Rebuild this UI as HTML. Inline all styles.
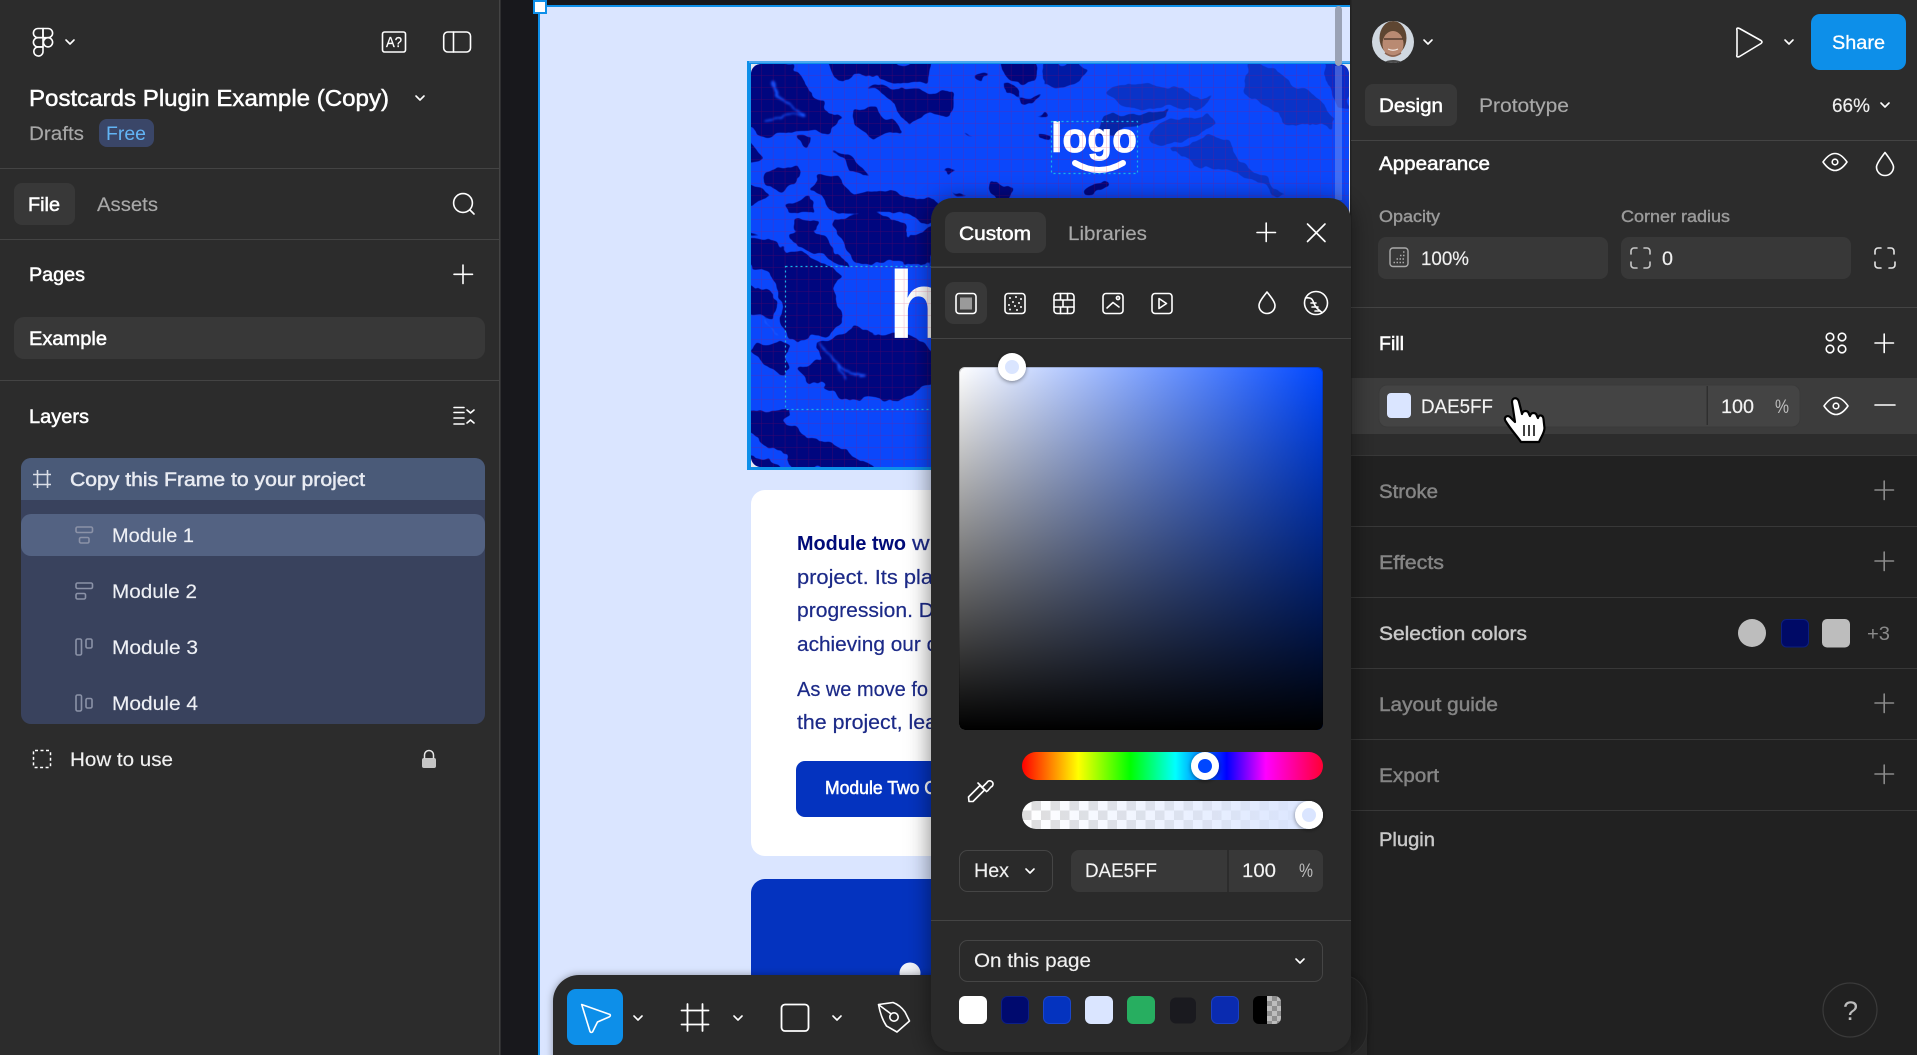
<!DOCTYPE html>
<html lang="en">
<head>
<meta charset="utf-8">
<title>Postcards Plugin Example (Copy)</title>
<style>
html,body{margin:0;padding:0;width:1917px;height:1055px;overflow:hidden;background:#18181c}
svg{display:block;font-family:"Liberation Sans",Arial,sans-serif}
text{white-space:pre}
.t{font-size:19.5px}
.w{fill:#fff}
.wm{fill:#fff;stroke:#fff;stroke-width:.5}
.g{fill:#a8a8a8;stroke:#a8a8a8;stroke-width:.15}
.d{fill:#858585;stroke:#858585;stroke-width:.45}
.s{fill:#c8c8c8;stroke:#c8c8c8;stroke-width:.45}
.r{stroke-width:.2}
.ic{fill:none;stroke:#fff;stroke-width:1.6;stroke-linecap:round;stroke-linejoin:round}
.icg{fill:none;stroke:#8a8a8a;stroke-width:1.6;stroke-linecap:round}
.n{fill:#00067f}
.f{fill:#0a33c8}
.v{fill:none;stroke:#1553ff;stroke-width:6;stroke-linecap:round}
.md{fill:none;stroke:#8b92a7;stroke-width:1.6}
</style>
</head>
<body>
<svg width="1917" height="1055" viewBox="0 0 1917 1055" xmlns="http://www.w3.org/2000/svg">
<defs>
  <clipPath id="heroClip"><rect x="751" y="64" width="598" height="403" rx="10"/></clipPath>
  <pattern id="grid" x="761" y="75" width="11.9" height="12" patternUnits="userSpaceOnUse">
    <path d="M0 0V12M0 0H11.9" stroke="#d40040" stroke-opacity=".27" stroke-width="1" fill="none"/>
  </pattern>
  <linearGradient id="sv1" x1="0" x2="1" y1="0" y2="0"><stop offset="0" stop-color="#fff"/><stop offset="1" stop-color="#0047ff"/></linearGradient>
  <linearGradient id="sv2" x1="0" x2="0" y1="0" y2="1"><stop offset="0" stop-color="#000" stop-opacity="0"/><stop offset="1" stop-color="#000"/></linearGradient>
  <linearGradient id="hue" x1="0" x2="1" y1="0" y2="0">
    <stop offset="0" stop-color="#f00"/><stop offset=".187" stop-color="#ff0"/><stop offset=".36" stop-color="#0f0"/><stop offset=".51" stop-color="#0ff"/><stop offset=".68" stop-color="#00f"/><stop offset=".81" stop-color="#f0f"/><stop offset="1" stop-color="#f03"/>
  </linearGradient>
  <linearGradient id="alpha" x1="0" x2="1" y1="0" y2="0"><stop offset="0" stop-color="#dae5ff" stop-opacity="0"/><stop offset="1" stop-color="#dae5ff"/></linearGradient>
  <pattern id="chk" x="1022" y="801" width="19" height="19" patternUnits="userSpaceOnUse">
    <rect width="19" height="19" fill="#fff"/><rect x="9.5" width="9.5" height="9.5" fill="#dedede"/><rect y="9.5" width="9.5" height="9.5" fill="#dedede"/>
  </pattern>
  <pattern id="chk2" x="1267" y="996" width="10" height="10" patternUnits="userSpaceOnUse">
    <rect width="10" height="10" fill="#bdbdbd"/><rect x="5" width="5" height="5" fill="#8f8f8f"/><rect y="5" width="5" height="5" fill="#8f8f8f"/>
  </pattern>
  <clipPath id="sw8"><rect x="1253" y="996" width="28" height="28" rx="6"/></clipPath>
  <clipPath id="av"><circle cx="1393" cy="42" r="21"/></clipPath>
  <filter id="soft" x="-8%" y="-8%" width="116%" height="116%" color-interpolation-filters="sRGB">
    <feTurbulence type="fractalNoise" baseFrequency=".012" numOctaves="4" seed="3" result="n"/>
    <feDisplacementMap in="SourceGraphic" in2="n" scale="60" xChannelSelector="R" yChannelSelector="G" result="d"/>
    <feGaussianBlur in="d" stdDeviation="3"/>
    <feComponentTransfer><feFuncA type="linear" slope="3" intercept="-1"/></feComponentTransfer>
  </filter>
  <filter id="psh" x="-15%" y="-10%" width="130%" height="120%"><feDropShadow dx="0" dy="3" stdDeviation="12" flood-color="#000" flood-opacity=".5"/></filter>
  <filter id="hsh" x="-40%" y="-40%" width="180%" height="180%"><feDropShadow dx="0" dy="1" stdDeviation="2" flood-color="#000" flood-opacity=".45"/></filter>
  <filter id="tsh" x="-5%" y="-10%" width="110%" height="120%"><feDropShadow dx="0" dy="0" stdDeviation="4" flood-color="#000" flood-opacity=".35"/></filter>
</defs>

<!-- canvas -->
<rect width="1917" height="1055" fill="#18181c"/>
<rect x="538" y="5" width="812" height="1050" fill="#0d8fe9"/>
<rect x="540" y="7" width="810" height="1048" fill="#dae5ff"/>

<!-- hero -->
<rect x="747" y="61" width="603" height="409" fill="#0d8fe9"/>
<rect x="749" y="61" width="601" height="2" fill="#4aa8f0"/>
<rect x="751" y="64" width="599" height="403" fill="#e4e8f2"/>
<g clip-path="url(#heroClip)">
  <rect x="751" y="64" width="600" height="403" fill="#0b47fb"/>
  <g transform="translate(500 0) scale(.33333)">
    <g filter="url(#soft)">
    <path class="n" d="M740,215L770,180L860,180L870,215L930,262L975,295L985,335L1020,365L985,395L920,385L860,390L800,403L740,395Z"/>
    <path class="n" d="M965,180L1295,195L1290,240L1200,250L1100,232L1060,225L1035,250L1000,240Z"/>
    <path class="n" d="M1060,335L1130,320L1200,380L1130,425L1100,400L1060,360Z"/>
    <path class="n" d="M1090,265L1350,275L1350,345L1280,345L1230,375L1170,320Z"/>
    <path class="n" d="M885,400L925,410L925,445L890,420Z"/>
    <path class="n" d="M740,410L790,470L740,490Z"/>
    <path class="n" d="M740,550L800,600L740,612Z"/>
    <path class="n" d="M800,505L890,500L895,545L850,570L790,560Z"/>
    <path class="n" d="M1000,460L1060,480L1120,540L1050,510Z"/>
    <path class="n" d="M960,525L1030,540L1060,580L1190,575L1300,600L1300,680L1210,640L1080,640L1000,620L925,575Z"/>
    <path class="n" d="M850,610L920,590L940,640L860,640Z"/>
    <path class="n" d="M1000,650L1120,640L1215,680L1220,700L1300,680L1300,790L1060,790L1040,740L1000,680Z"/>
    <path class="n" d="M880,660L945,660L945,690L880,690Z"/>
    <path class="n" d="M855,700L930,690L990,740L1050,795L940,760L860,720Z"/>
    <path class="n" d="M740,680L800,715L740,705Z"/>
    <path class="n" d="M740,710L800,735L900,760L1015,820L1015,960L980,1015L900,1015L860,1000L850,905L800,820L740,800Z"/>
    <path class="n" d="M740,850L830,890L830,960L740,930Z"/>
    <path class="n" d="M760,1050L830,1020L880,1030L850,1130L790,1100Z"/>
    <path class="n" d="M960,1040L1050,985L1150,1000L1250,1020L1300,1060L1300,1150L1220,1190L1200,1205L1060,1210L1000,1170L905,1150L880,1100L960,1090Z"/>
    <path class="n" d="M740,1230L860,1222L870,1245L850,1265L900,1290L1030,1345L1140,1410L890,1410L870,1365L740,1300Z"/>
    <path class="n" d="M740,1350L820,1370L850,1410L760,1410Z"/>
    <path class="v" d="M815,240L850,300L915,355M790,355L915,355"/>
    <path class="v" d="M1000,1080L1100,1130M800,955L830,1000M970,1040L1050,1130"/>
    </g>
  </g>
  <g transform="translate(930 0) scale(.33333)">
    <g filter="url(#soft)">
    <path class="n" d="M205,180L300,180L305,235L240,240Z"/>
    <path fill="#001aa5" d="M335,185L430,185L480,225L400,270L350,260L325,230Z"/>
    <path class="n" d="M225,255L260,255L265,285L225,280Z"/>
    <path class="n" d="M255,290L350,285L320,305L270,305Z"/>
    <path class="n" d="M140,215L190,225L150,235Z"/>
    <path class="n" d="M0,300L50,330L0,330Z"/>
    <path class="n" d="M330,385L365,395L360,420L330,410Z"/>
    <path class="n" d="M305,340L360,345L340,350Z"/>
    <path class="n" d="M90,395L150,405L110,405Z"/>
    <path class="n" d="M190,560L250,560L240,590L190,575Z"/>
    <path class="n" d="M450,570L530,540L540,560L470,585Z"/>
    <path class="n" d="M50,510L85,510L65,525Z"/>
    <path class="n" d="M70,570L105,595L80,595Z"/>
    <path fill="#0a2cc8" d="M1180,180L1270,180L1270,325L1220,310L1190,230Z"/>
    <path class="f" d="M535,280L580,255L700,255L860,295L780,325L590,320Z"/>
    <path class="f" d="M945,185L1040,215L1110,280L1210,350L1200,375L1050,360L1000,310L940,260Z"/>
    <path class="f" d="M650,415L700,365L830,340L850,370L720,440L680,445Z"/>
    <path class="f" d="M730,450L830,400L900,430L980,520L1080,590L960,540L800,490Z"/>
    <path fill="#0426a8" d="M480,390L530,350L720,335L640,390L500,400Z"/>
    </g>
  </g>
  <!-- logo -->
  <text x="1051" y="152" font-size="42" font-weight="700" fill="#fff" stroke="#fff" stroke-width=".8" textLength="86" lengthAdjust="spacingAndGlyphs">logo</text>
  <path d="M1075 163Q1099 177 1123 163" fill="none" stroke="#fff" stroke-width="6" stroke-linecap="round"/>
  <!-- heading -->
  <text x="888" y="338" font-size="96" font-weight="700" fill="#fff">h</text>
  <rect x="751" y="64" width="600" height="403" fill="url(#grid)"/>
</g>
<rect x="785.5" y="266.5" width="600" height="143" fill="none" stroke="#18b4e8" stroke-width="1.2" stroke-dasharray="2 3"/>
<rect x="1051.5" y="121.5" width="86" height="52" fill="none" stroke="#18b4e8" stroke-width="1.2" stroke-dasharray="2 3"/>

<!-- scrollbar -->
<rect x="1335" y="6" width="7" height="60" rx="3.5" fill="#9aa2b5"/>
<rect x="1335" y="66" width="7" height="134" fill="#8fa8ef" fill-opacity=".4"/>

<!-- frame handle -->
<rect x="534" y="1" width="12" height="12" fill="#fff" stroke="#0d8fe9" stroke-width="2"/>

<!-- content cards -->
<rect x="751" y="490" width="640" height="366" rx="14" fill="#fff"/>
<text x="797" y="550" font-size="20" font-weight="700" fill="#000a78" textLength="109" lengthAdjust="spacingAndGlyphs">Module two</text>
<text x="912" y="550" font-size="20" fill="#1c2a88" stroke="#1c2a88" stroke-width=".2" textLength="23" lengthAdjust="spacingAndGlyphs">wi</text>
<g font-size="20" fill="#1c2a88" stroke="#1c2a88" stroke-width=".2">
  <text x="797" y="584" textLength="136" lengthAdjust="spacingAndGlyphs">project. Its pla</text>
  <text x="797" y="617" textLength="137" lengthAdjust="spacingAndGlyphs">progression. D</text>
  <text x="797" y="651" textLength="140" lengthAdjust="spacingAndGlyphs">achieving our c</text>
  <text x="797" y="696" textLength="131" lengthAdjust="spacingAndGlyphs">As we move fo</text>
  <text x="797" y="729" textLength="140" lengthAdjust="spacingAndGlyphs">the project, lea</text>
</g>
<rect x="796" y="761" width="200" height="56" rx="9" fill="#0433bf"/>
<text x="825" y="794" font-size="18" fill="#fff" stroke="#fff" stroke-width=".55" textLength="112" lengthAdjust="spacingAndGlyphs">Module Two C</text>
<rect x="751" y="879" width="640" height="190" rx="14" fill="#0433bf"/>
<circle cx="910" cy="973" r="10.5" fill="#f2f4fa"/>

<!-- left panel -->
<rect x="0" y="0" width="499" height="1055" fill="#2c2c2c"/>
<rect x="499" y="0" width="1.5" height="1055" fill="#444"/>
<g fill="#444"><rect y="168" width="499" height="1"/><rect y="239" width="499" height="1"/><rect y="380" width="499" height="1"/></g>

<g class="ic" stroke-width="1.5">
  <path d="M43 28.5H38a4.6 4.6 0 0 0 0 9.2H43Z"/>
  <path d="M43 28.5h5a4.6 4.6 0 0 1 0 9.2H43Z"/>
  <path d="M43 37.7H38a4.6 4.6 0 0 0 0 9.2H43Z"/>
  <circle cx="48" cy="42.3" r="4.6"/>
  <path d="M38 46.9H43V51a4.6 4.6 0 1 1-5-4.1Z"/>
  <path d="M66 40l4 4 4-4"/>
  <rect x="382.5" y="32" width="23" height="20" rx="2"/>
  <rect x="443.7" y="32" width="26.8" height="20" rx="4"/>
  <path d="M453.5 32v20"/>
  <path d="M416 96l4 4 4-4"/>
  <circle cx="463" cy="203" r="9.4"/>
  <path d="M470 210l4 4"/>
  <path d="M454 274.300h18.500M463 265v18.500"/>
  <path d="M454 407.500h10M454 412.500h10M454 418h10M454 424h10"/>
  <path d="M467 410l3.500 3 3.500-3M467 423l3.500-3 3.500 3"/>
</g>
<text x="386" y="47" font-size="15" fill="#fff" stroke="#fff" stroke-width=".3" textLength="16" lengthAdjust="spacingAndGlyphs">A?</text>

<text class="wm" x="29" y="106" font-size="23.5" textLength="360" lengthAdjust="spacingAndGlyphs">Postcards Plugin Example (Copy)</text>
<text class="g t" x="29" y="140" textLength="55" lengthAdjust="spacingAndGlyphs">Drafts</text>
<rect x="99" y="119" width="55" height="28" rx="8" fill="#3a4668"/>
<text x="106" y="140" font-size="19.5" fill="#62b4f5" textLength="40" lengthAdjust="spacingAndGlyphs">Free</text>

<rect x="14" y="183" width="61" height="42" rx="8" fill="#383838"/>
<text class="wm t" x="28" y="211" textLength="32" lengthAdjust="spacingAndGlyphs">File</text>
<text class="g t" x="97" y="211" textLength="61" lengthAdjust="spacingAndGlyphs">Assets</text>

<text class="wm t" x="29" y="281" textLength="56" lengthAdjust="spacingAndGlyphs">Pages</text>
<rect x="14" y="317" width="471" height="42" rx="10" fill="#383838"/>
<text class="wm t" x="29" y="345" textLength="78" lengthAdjust="spacingAndGlyphs">Example</text>

<text class="wm t" x="29" y="423" textLength="60" lengthAdjust="spacingAndGlyphs">Layers</text>

<rect x="21" y="458" width="464" height="266" rx="10" fill="#39425d"/>
<path d="M31 458H475a10 10 0 0 1 10 10V500H21V468a10 10 0 0 1 10-10Z" fill="#4a5a78"/>
<rect x="21" y="514" width="464" height="42" rx="10" fill="#536282"/>
<path d="M37.500 470v18M47.500 470v18M33 474.500h18M33 484.500h18" stroke="#d9dde6" stroke-width="1.6" fill="none"/>
<text x="70" y="486" font-size="19.5" fill="#e8ebf2" stroke="#e8ebf2" stroke-width=".5" textLength="295" lengthAdjust="spacingAndGlyphs">Copy this Frame to your project</text>
<g class="md">
  <rect x="76" y="527" width="16.500" height="5.500" rx="1.500"/><rect x="79.500" y="537.500" width="9.500" height="5.500" rx="1.500"/>
  <rect x="76" y="583" width="16.500" height="5.500" rx="1.500"/><rect x="76" y="593.500" width="9.500" height="5.500" rx="1.500"/>
  <rect x="76" y="639" width="5.500" height="16" rx="1.500"/><rect x="86" y="639" width="6" height="9" rx="1.500"/>
  <rect x="76" y="695" width="5.500" height="16" rx="1.500"/><rect x="86" y="698.500" width="6" height="9.500" rx="1.500"/>
</g>
<g font-size="19.5" fill="#eef0f5" stroke="#eef0f5" stroke-width=".15">
  <text x="112" y="542" textLength="82" lengthAdjust="spacingAndGlyphs">Module 1</text>
  <text x="112" y="598" textLength="85" lengthAdjust="spacingAndGlyphs">Module 2</text>
  <text x="112" y="654" textLength="86" lengthAdjust="spacingAndGlyphs">Module 3</text>
  <text x="112" y="710" textLength="86" lengthAdjust="spacingAndGlyphs">Module 4</text>
</g>
<rect x="33.500" y="750.500" width="17" height="17" rx="1.500" fill="none" stroke="#fff" stroke-width="1.500" stroke-dasharray="3 2.500"/>
<text class="t" x="70" y="766" fill="#f0f0f0" stroke="#f0f0f0" stroke-width=".15" textLength="103" lengthAdjust="spacingAndGlyphs">How to use</text>
<rect x="422" y="758" width="14" height="10" rx="2" fill="#c5c5c5"/>
<path d="M424.500 758.500v-3.500a4.500 4.500 0 0 1 9 0v3.500" fill="none" stroke="#e5e5e5" stroke-width="1.500"/>

<!-- right panel -->
<rect x="1350" y="0" width="567" height="1055" fill="#2c2c2c"/>
<rect x="1350" y="0" width="1.500" height="1055" fill="#222"/>
<rect x="1351.500" y="456" width="566" height="599" fill="#212121"/>
<rect x="1351.500" y="378" width="566" height="56" fill="#3c3c3c"/>
<g fill="#444">
  <rect x="1351" y="140" width="566" height="1"/><rect x="1351" y="307" width="566" height="1"/>
</g>
<g fill="#383838">
  <rect x="1351" y="455" width="566" height="1"/><rect x="1351" y="526" width="566" height="1"/><rect x="1351" y="597" width="566" height="1"/><rect x="1351" y="668" width="566" height="1"/><rect x="1351" y="739" width="566" height="1"/><rect x="1351" y="810" width="566" height="1"/>
</g>

<!-- avatar -->
<g clip-path="url(#av)">
  <rect x="1372" y="21" width="42" height="42" fill="#d0d8e0"/>
  <ellipse cx="1393" cy="38" rx="13.500" ry="17" fill="#5e4632"/>
  <ellipse cx="1393" cy="44" rx="10.500" ry="13" fill="#b98a72"/>
  <path d="M1380 64q13-8 26 0Z" fill="#4a4a4a"/>
  <path d="M1385 53q8 6 16 0" fill="none" stroke="#8a6350" stroke-width="1.500"/>
  <path d="M1384 39h19" stroke="#3e2c22" stroke-width="1.200"/>
  <path d="M1388 49q5 2.500 10 0" fill="none" stroke="#f2e6e0" stroke-width="1.200"/>
</g>
<g class="ic">
  <path d="M1424 40l4 4 4-4"/>
  <path d="M1737 30.500Q1736 27 1739.500 28.500L1761 40.500Q1763 42 1761 43.500L1739.500 56.500Q1736 58 1737 54.500Z"/>
  <path d="M1785 40l4 4 4-4"/>
  <path d="M1881 103l4 4 4-4"/>
  <path d="M1823 162Q1835 145 1847 162Q1835 179 1823 162Z"/>
  <circle cx="1835" cy="162" r="2.800"/>
  <path d="M1885 152.500C1890 159 1893.500 164 1893.500 167a8.500 8.500 0 0 1-17 0C1876.500 164 1880 159 1885 152.500Z"/>
</g>
<rect x="1811" y="14" width="95" height="56" rx="9" fill="#0d8fe9"/>
<text class="t" x="1832" y="49" fill="#fff" stroke="#fff" stroke-width=".3" textLength="53" lengthAdjust="spacingAndGlyphs">Share</text>

<rect x="1365" y="84" width="92" height="42" rx="8" fill="#383838"/>
<text class="wm t" x="1379" y="112" textLength="64" lengthAdjust="spacingAndGlyphs">Design</text>
<text class="g t" x="1479" y="112" textLength="90" lengthAdjust="spacingAndGlyphs">Prototype</text>
<text class="t" x="1832" y="112" fill="#f0f0f0" stroke="#f0f0f0" stroke-width=".15" textLength="38" lengthAdjust="spacingAndGlyphs">66%</text>

<text class="wm t" x="1379" y="170" textLength="111" lengthAdjust="spacingAndGlyphs">Appearance</text>
<text x="1379" y="222" font-size="17" fill="#9a9a9a" stroke="#9a9a9a" stroke-width=".4" textLength="61" lengthAdjust="spacingAndGlyphs">Opacity</text>
<text x="1621" y="222" font-size="17" fill="#9a9a9a" stroke="#9a9a9a" stroke-width=".4" textLength="109" lengthAdjust="spacingAndGlyphs">Corner radius</text>
<rect x="1378" y="237" width="230" height="42" rx="8" fill="#383838"/>
<rect x="1621" y="237" width="230" height="42" rx="8" fill="#383838"/>
<rect x="1390" y="248" width="18" height="18.500" rx="3" fill="none" stroke="#aaa" stroke-width="1.400"/>
<path d="M1393.500 262.500h11M1396.500 259h8M1400 255.500h4.500M1403 252h1.500" stroke="#aaa" stroke-width="1.400" stroke-dasharray="1.500 1.500" fill="none"/>
<text class="t" x="1421" y="265" fill="#f0f0f0" stroke="#f0f0f0" stroke-width=".15" textLength="48" lengthAdjust="spacingAndGlyphs">100%</text>
<g fill="none" stroke="#c8c8c8" stroke-width="1.600" stroke-linecap="round">
  <path d="M1631 254v-3a3 3 0 0 1 3-3h3M1644 248h3a3 3 0 0 1 3 3v3M1650 262v3a3 3 0 0 1-3 3h-3M1637 268h-3a3 3 0 0 1-3-3v-3"/>
</g>
<text class="t" x="1662" y="265" fill="#f0f0f0" stroke="#f0f0f0" stroke-width=".15" textLength="11" lengthAdjust="spacingAndGlyphs">0</text>
<g fill="none" stroke="#e6e6e6" stroke-width="1.600" stroke-linecap="round">
  <path d="M1875 254v-3a3 3 0 0 1 3-3h3M1888 248h3a3 3 0 0 1 3 3v3M1895 262v3a3 3 0 0 1-3 3h-3M1881 268h-3a3 3 0 0 1-3-3v-3"/>
</g>

<text class="wm t" x="1379" y="350" textLength="25" lengthAdjust="spacingAndGlyphs">Fill</text>
<g class="ic">
  <circle cx="1830" cy="337" r="3.800"/><circle cx="1842" cy="337" r="3.800"/><circle cx="1830" cy="349" r="3.800"/><circle cx="1842" cy="349" r="3.800"/>
  <path d="M1875 343h18.500M1884.200 334v18.500"/>
</g>

<rect x="1379" y="385" width="421" height="42" rx="8" fill="#444" stroke="#3a3a3a"/>
<rect x="1387" y="393" width="24" height="25" rx="4" fill="#dae5ff"/>
<text class="t" x="1421" y="413" fill="#f4f4f4" stroke="#f4f4f4" stroke-width=".15" textLength="72" lengthAdjust="spacingAndGlyphs">DAE5FF</text>
<rect x="1706.500" y="386" width="1.500" height="39" fill="#2f2f2f"/>
<text class="t" x="1721" y="413" fill="#f4f4f4" stroke="#f4f4f4" stroke-width=".15" textLength="33" lengthAdjust="spacingAndGlyphs">100</text>
<text class="t" x="1775" y="413" fill="#bdbdbd" textLength="14" lengthAdjust="spacingAndGlyphs">%</text>
<g class="ic">
  <path d="M1824 406Q1836 389 1848 406Q1836 423 1824 406Z"/>
  <circle cx="1836" cy="406" r="2.800"/>
  <path d="M1875 405h20"/>
</g>

<text class="d t" x="1379" y="498" textLength="59" lengthAdjust="spacingAndGlyphs">Stroke</text>
<text class="d t" x="1379" y="569" textLength="65" lengthAdjust="spacingAndGlyphs">Effects</text>
<text class="s t" x="1379" y="640" textLength="148" lengthAdjust="spacingAndGlyphs">Selection colors</text>
<text class="d t" x="1379" y="711" textLength="119" lengthAdjust="spacingAndGlyphs">Layout guide</text>
<text class="d t" x="1379" y="782" textLength="60" lengthAdjust="spacingAndGlyphs">Export</text>
<text class="s t" x="1379" y="846" textLength="56" lengthAdjust="spacingAndGlyphs">Plugin</text>
<g class="icg">
  <path d="M1875 490h18.500M1884.200 481v18.500"/>
  <path d="M1875 561h18.500M1884.200 552v18.500"/>
  <path d="M1875 703h18.500M1884.200 694v18.500"/>
  <path d="M1875 774h18.500M1884.200 765v18.500"/>
</g>
<circle cx="1752" cy="633" r="14" fill="#bdbdbd"/>
<rect x="1781.500" y="619.500" width="27" height="27.500" rx="5" fill="#000a66" stroke="#0c1f80"/>
<rect x="1822" y="619" width="28" height="28.500" rx="5" fill="#bdbdbd"/>
<text x="1867" y="640" font-size="19.5" fill="#8a8a8a" textLength="23" lengthAdjust="spacingAndGlyphs">+3</text>

<circle cx="1850" cy="1010" r="27" fill="#212121" stroke="#3a3a3a" stroke-width="1.200"/>
<text x="1843" y="1020" font-size="27" fill="#bdbdbd">?</text>

<!-- hand cursor -->
<path d="M1512 402C1512 397 1518 397 1519 402L1522 414C1523 410 1528 410 1529 414L1530 416C1531 412 1536 412 1537 416L1538 418C1539 414 1543 415 1543.500 419L1544.500 428C1544.500 433 1541 437 1539 442L1521 442C1517 436 1511 430 1505.500 421C1503 417 1508 414 1511 418L1515 422Z" fill="#fff" stroke="#000" stroke-width="2.200" stroke-linejoin="round"/>
<path d="M1524 425v11M1529 425v11M1534 425v11" stroke="#000" stroke-width="1.500"/>

<!-- toolbar -->
<rect x="553" y="975" width="814" height="110" rx="26" fill="#2c2c2c" filter="url(#tsh)"/>
<path d="M1351 977C1360 980 1367 990 1367 1005V1030C1367 1042 1360 1050 1351 1055" fill="#232323" stroke="#2f2f2f"/>
<rect x="567" y="989" width="56" height="56" rx="9" fill="#0d8fe9"/>
<g class="ic">
  <path d="M581.700 1004.500L610 1014.500Q611 1016 609 1017L597.500 1022L592.500 1032Q591 1033 590 1031.500Z"/>
  <path d="M634 1016l4 4 4-4M734 1016l4 4 4-4M833 1016l4 4 4-4"/>
  <path d="M687.500 1004v27M702.500 1004v27M681.500 1010.500h27M681.500 1024.500h27" stroke-width="1.800"/>
  <rect x="781.500" y="1004.500" width="27" height="26.500" rx="3.500" stroke-width="1.800"/>
  <path d="M878.500 1004.500L893 1002.500Q900 1005 905 1012L909.500 1021L897 1032L886.500 1026Q881 1018 878.500 1004.500Z"/>
  <path d="M879 1005L890.500 1013.500"/>
  <circle cx="894" cy="1017" r="4.200"/>
</g>

<!-- color picker -->
<rect x="931" y="198" width="420" height="854" rx="22" fill="#2c2c2c" filter="url(#psh)"/>
<rect x="945" y="212" width="101" height="41" rx="9" fill="#383838"/>
<text class="wm t" x="959" y="240" textLength="72" lengthAdjust="spacingAndGlyphs">Custom</text>
<text class="g t" x="1068" y="240" textLength="79" lengthAdjust="spacingAndGlyphs">Libraries</text>
<g class="ic">
  <path d="M1257 232.500h18.500M1266.200 223v18.500"/>
  <path d="M1307.500 224l17.500 17.500M1325 224l-17.500 17.500"/>
</g>
<rect x="931" y="266.500" width="420" height="1.500" fill="#464646"/>
<rect x="931" y="338" width="420" height="1" fill="#444"/>
<rect x="945" y="282" width="42" height="42" rx="9" fill="#383838"/>
<g class="ic" stroke-width="1.400">
  <rect x="956" y="293.500" width="20" height="20" rx="3"/>
  <rect x="1005" y="293.500" width="20" height="20" rx="3"/>
  <rect x="1054" y="293.500" width="20" height="20" rx="3"/>
  <path d="M1054 300h20M1054 307h20M1060.500 293.500v6.500M1067.500 293.500v6.500M1060.500 307v6.500M1067.500 307v6.500M1063 300v7"/>
  <rect x="1103" y="293.500" width="20" height="20" rx="3"/>
  <path d="M1107 308l6-5.500 6 4.500"/>
  <circle cx="1118" cy="298" r="1.600"/>
  <rect x="1152" y="293.500" width="20" height="20" rx="3"/>
  <path d="M1159 298.500l7.500 5-7.500 5Z"/>
  <path d="M1267 292C1271 297 1275 302 1275 305.500a8 8 0 0 1-16 0C1259 302 1263 297 1267 292Z"/>
  <circle cx="1316" cy="303" r="11.500"/>
  <path d="M1305.500 298q6-1 7.500 3t3 6 6 5.500"/>
  <path d="M1311 303h5M1312 307h6M1315 311h5"/>
</g>
<rect x="960" y="297.500" width="12" height="12" fill="#9a9a9a"/>
<g fill="#fff">
  <circle cx="1010" cy="298" r="1"/><circle cx="1016" cy="297" r="1"/><circle cx="1021" cy="299" r="1"/><circle cx="1013" cy="302" r="1"/><circle cx="1019" cy="303" r="1"/><circle cx="1009" cy="305" r="1"/><circle cx="1015" cy="306" r="1"/><circle cx="1021" cy="307" r="1"/><circle cx="1010" cy="309.500" r="1"/><circle cx="1017" cy="310" r="1"/>
</g>

<!-- SV square -->
<rect x="959" y="367" width="364" height="363" rx="6" fill="url(#sv1)"/>
<rect x="959" y="367" width="364" height="363" rx="6" fill="url(#sv2)"/>
<rect x="959.500" y="367.500" width="363" height="362" rx="6" fill="none" stroke="#000" stroke-opacity=".18"/>
<circle cx="1012" cy="367" r="14" fill="#fff" filter="url(#hsh)"/>
<circle cx="1012" cy="367" r="7" fill="#dae5ff"/>

<!-- hue / alpha -->
<rect x="1022" y="752" width="301" height="28" rx="14" fill="url(#hue)"/>
<circle cx="1205" cy="766" r="14" fill="#fff" filter="url(#hsh)"/>
<circle cx="1205" cy="766" r="7" fill="#0047ff"/>
<rect x="1022" y="801" width="301" height="28" rx="14" fill="url(#chk)"/>
<rect x="1022" y="801" width="301" height="28" rx="14" fill="url(#alpha)"/>
<circle cx="1309" cy="815" r="14" fill="#fff" filter="url(#hsh)"/>
<circle cx="1309" cy="815" r="7" fill="#dae5ff"/>

<!-- eyedropper -->
<g class="ic" stroke-width="1.500">
  <path d="M969 801.500L968.500 797L980 785.500L984.500 790L973 801.500Z"/>
  <path d="M978 783L986.500 791.500"/>
  <path d="M983 786.500L987 782.500A3.200 3.200 0 1 1 991 787L987.500 791"/>
</g>

<!-- hex -->
<rect x="959.500" y="850.500" width="93" height="41" rx="8" fill="none" stroke="#454545"/>
<text class="t" x="974" y="877" fill="#f0f0f0" stroke="#f0f0f0" stroke-width=".15" textLength="35" lengthAdjust="spacingAndGlyphs">Hex</text>
<path class="ic" d="M1026 869l4 4 4-4"/>
<rect x="1071" y="850" width="252" height="42" rx="8" fill="#383838"/>
<rect x="1227" y="850" width="2" height="42" fill="#2c2c2c"/>
<text class="t" x="1085" y="877" fill="#f4f4f4" stroke="#f4f4f4" stroke-width=".15" textLength="72" lengthAdjust="spacingAndGlyphs">DAE5FF</text>
<text class="t" x="1242" y="877" fill="#f4f4f4" stroke="#f4f4f4" stroke-width=".15" textLength="34" lengthAdjust="spacingAndGlyphs">100</text>
<text class="t" x="1299" y="877" fill="#bdbdbd" textLength="14" lengthAdjust="spacingAndGlyphs">%</text>

<rect x="931" y="920" width="420" height="1" fill="#444"/>
<rect x="959.500" y="940.500" width="363" height="41" rx="8" fill="none" stroke="#454545"/>
<text class="t" x="974" y="967" fill="#f0f0f0" stroke="#f0f0f0" stroke-width=".15" textLength="117" lengthAdjust="spacingAndGlyphs">On this page</text>
<path class="ic" d="M1296 959l4 4 4-4"/>

<!-- swatches -->
<rect x="959" y="996" width="28" height="28" rx="6" fill="#fff"/>
<rect x="1001.500" y="996.500" width="27" height="27" rx="6" fill="#000a6e" stroke="#0c1f86"/>
<rect x="1043.500" y="996.500" width="27" height="27" rx="6" fill="#0433bf" stroke="#1a46cc"/>
<rect x="1085" y="996" width="28" height="28" rx="6" fill="#dae5ff"/>
<rect x="1127" y="996" width="28" height="28" rx="6" fill="#27ae60"/>
<rect x="1170" y="997.500" width="26" height="26" rx="6" fill="#1a1a1f"/>
<rect x="1211.500" y="996.500" width="27" height="27" rx="6" fill="#0a2bb0" stroke="#1a40c4"/>
<g clip-path="url(#sw8)">
  <rect x="1253" y="996" width="14" height="28" fill="#000"/>
  <rect x="1267" y="996" width="14" height="28" fill="url(#chk2)"/>
</g>
</svg>
</body>
</html>
